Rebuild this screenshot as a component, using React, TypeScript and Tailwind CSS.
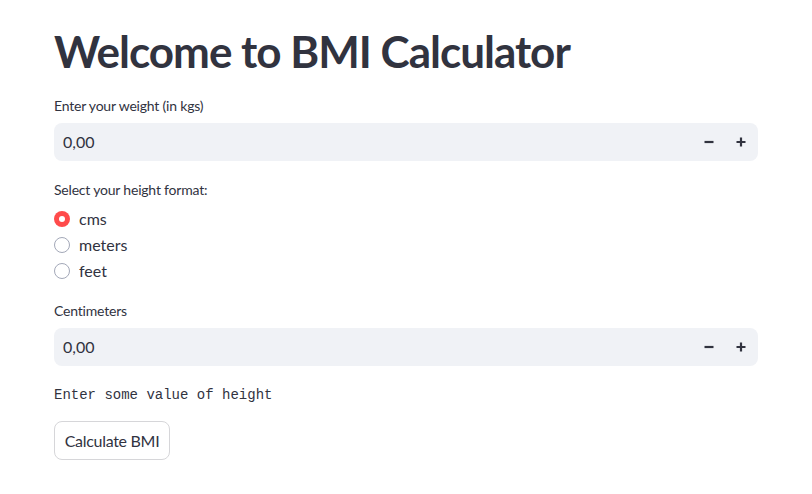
import { useState } from "react";

function NumberInput({ label }: { label: string }) {
  return (
    <div className="flex flex-col">
      <label className="mb-[7px] text-[14px] leading-[20px] tracking-[-0.2px] text-[#31333f]">{label}</label>
      <div className="flex h-[38px] items-center rounded-[8px] bg-[#f0f2f6] pl-[9px] pr-[1px]">
        <span className="flex-1 text-[16px] text-[#31333f]">0,00</span>
        <button className="flex h-[32px] w-[32px] items-center justify-center text-[#31333f]">
          <svg width="10" height="10" viewBox="0 0 10 10">
            <path d="M0.5 5h9" stroke="currentColor" strokeWidth="2.2" />
          </svg>
        </button>
        <button className="flex h-[32px] w-[32px] items-center justify-center text-[#31333f]">
          <svg width="10" height="10" viewBox="0 0 10 10">
            <path d="M0.5 5h9M5 0.5v9" stroke="currentColor" strokeWidth="2.2" />
          </svg>
        </button>
      </div>
    </div>
  );
}

const options = ["cms", "meters", "feet"];

export default function App() {
  const [unit, setUnit] = useState("cms");

  return (
    <div className="min-h-screen w-full bg-white font-['Lato','Noto_Sans',sans-serif] text-[#31333f]">
      <div className="flex flex-col px-[54px] pt-[24px]">
        <h1 className="text-[44px] font-bold leading-[54px] tracking-[-1px] text-[#31333f]">
          Welcome to BMI Calculator
        </h1>

        <div className="mt-[18px]">
          <NumberInput label="Enter your weight (in kgs)" />
        </div>

        <div className="mt-[19px] flex flex-col">
          <label className="mb-[6px] text-[14px] leading-[20px] tracking-[-0.2px]">Select your height format:</label>
          <div className="flex flex-col">
            {options.map((o) => (
              <button
                key={o}
                onClick={() => setUnit(o)}
                className="flex h-[26px] items-center gap-[9px] text-left"
              >
                {unit === o ? (
                  <span className="flex h-[16px] w-[16px] items-center justify-center rounded-full bg-[#ff4b4b]">
                    <span className="h-[6px] w-[6px] rounded-full bg-white" />
                  </span>
                ) : (
                  <span className="h-[16px] w-[16px] rounded-full border border-[#a3a8b8]" />
                )}
                <span className="text-[16px] leading-[20px]">{o}</span>
              </button>
            ))}
          </div>
        </div>

        <div className="mt-[17px]">
          <NumberInput label="Centimeters" />
        </div>

        <p className="mt-[20px] font-['Liberation_Mono',monospace] text-[14px] leading-[18px] text-[#31333f]">
          Enter some value of height
        </p>

        <div className="mt-[17px]">
          <button className="h-[39px] w-[116px] rounded-[8px] border border-[#d6d6d9] bg-white text-[16px] tracking-[-0.3px] text-[#31333f]">
            Calculate BMI
          </button>
        </div>
      </div>
    </div>
  );
}
